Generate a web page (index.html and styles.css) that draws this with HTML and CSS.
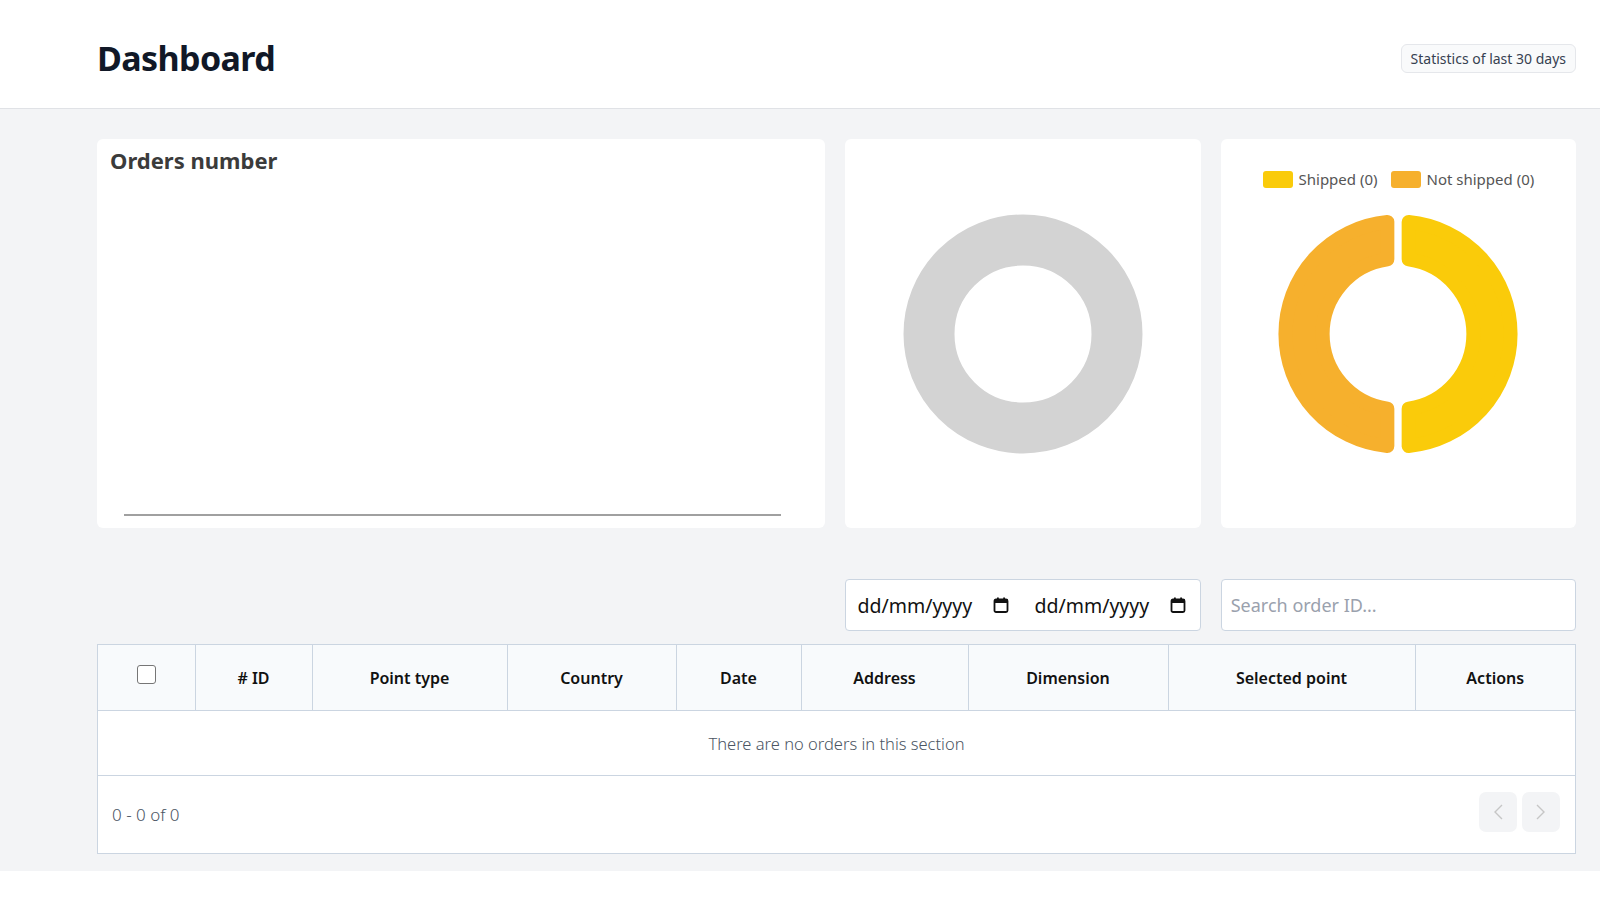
FILE: index.html
```html
<!DOCTYPE html>
<html lang="en">
<head>
<meta charset="UTF-8">
<meta name="viewport" content="width=device-width, initial-scale=1.0">
<title>Dashboard</title>
<link rel="stylesheet" href="styles.css">
</head>
<body>
	<header class="top">
		<h1>Dashboard</h1>
		<span class="period">Statistics of last 30 days</span>
	</header>

	<main class="content">
		<section class="charts">
			<div class="card">
				<h2>Orders number</h2>
				<div class="axis"></div>
			</div>

			<div class="card card-center">
				<svg class="donut" width="240" height="240" viewBox="-120 -120 240 240">
					<circle cx="0" cy="0" r="94" fill="none" stroke="#d3d3d3" stroke-width="51"/>
				</svg>
			</div>

			<div class="card card-legend">
				<div class="legend">
					<span class="legend-item"><i class="swatch shipped"></i>Shipped (0)</span>
					<span class="legend-item"><i class="swatch not-shipped"></i>Not shipped (0)</span>
				</div>
				<svg class="donut" width="240" height="240" viewBox="-120 -120 240 240">
					<path d="M -10.65 112 A 112.5 112.5 0 0 1 -10.65 -112 L -10.65 -74.64 A 75.4 75.4 0 0 0 -10.65 74.64 Z" fill="#f6b02d" stroke="#f6b02d" stroke-width="14" stroke-linejoin="round"/>
					<path d="M 10.65 -112 A 112.5 112.5 0 0 1 10.65 112 L 10.65 74.64 A 75.4 75.4 0 0 0 10.65 -74.64 Z" fill="#facb0a" stroke="#facb0a" stroke-width="14" stroke-linejoin="round"/>
				</svg>
			</div>
		</section>

		<section class="filters">
			<div class="dates">
				<span class="date-field">dd/mm/yyyy
					<svg width="16" height="16" viewBox="0 0 16 16"><rect x="1.5" y="2.5" width="13" height="12.5" rx="1.5" fill="none" stroke="#111" stroke-width="1.8"/><rect x="1.5" y="2.5" width="13" height="3.5" fill="#111"/><rect x="4" y="0.5" width="1.8" height="3" fill="#111"/><rect x="10.2" y="0.5" width="1.8" height="3" fill="#111"/></svg>
				</span>
				<span class="date-field">dd/mm/yyyy
					<svg width="16" height="16" viewBox="0 0 16 16"><rect x="1.5" y="2.5" width="13" height="12.5" rx="1.5" fill="none" stroke="#111" stroke-width="1.8"/><rect x="1.5" y="2.5" width="13" height="3.5" fill="#111"/><rect x="4" y="0.5" width="1.8" height="3" fill="#111"/><rect x="10.2" y="0.5" width="1.8" height="3" fill="#111"/></svg>
				</span>
			</div>
			<input class="search" type="text" placeholder="Search order ID...">
		</section>

		<div class="orders">
			<table>
				<colgroup>
					<col class="c-check">
					<col class="c-id">
					<col class="c-type">
					<col class="c-country">
					<col class="c-date">
					<col class="c-address">
					<col class="c-dim">
					<col class="c-point">
					<col>
				</colgroup>
				<thead>
					<tr>
						<th><span class="check"></span></th>
						<th># ID</th>
						<th>Point type</th>
						<th>Country</th>
						<th>Date</th>
						<th>Address</th>
						<th>Dimension</th>
						<th>Selected point</th>
						<th>Actions</th>
					</tr>
				</thead>
				<tbody>
					<tr>
						<td colspan="9" class="empty">There are no orders in this section</td>
					</tr>
				</tbody>
			</table>
			<div class="pager">
				<span>0 - 0 of 0</span>
				<div class="pager-buttons">
					<button type="button"><svg width="10" height="16" viewBox="0 0 10 16"><path d="M9 1 L2 8 L9 15" fill="none" stroke="#c6c6c6" stroke-width="1.4"/></svg></button>
					<button type="button"><svg width="10" height="16" viewBox="0 0 10 16"><path d="M1 1 L8 8 L1 15" fill="none" stroke="#c6c6c6" stroke-width="1.4"/></svg></button>
				</div>
			</div>
		</div>
	</main>
</body>
</html>
```

FILE: styles.css
```css
body {
	font-family: 'Segoe UI', 'Noto Sans', 'Open Sans', sans-serif;
	margin: 0;
	padding: 0;
	background-color: white;
}

.top {
	height: 100px;
	box-sizing: content-box;
	background-color: white;
	border-bottom: 1px solid #e0e2e6;
	box-shadow: 0 1px 2px rgba(0, 0, 0, 0.05);
	display: flex;
	align-items: center;
	justify-content: space-between;
	padding: 8px 24px 0 97px;
}

.top h1 {
	margin: 0;
	font-size: 34px;
	font-weight: 700;
	color: #111827;
	letter-spacing: -0.6px;
}

.period {
	font-size: 14px;
	color: #374151;
	background-color: #f9fafb;
	border: 1px solid #e5e7eb;
	border-radius: 6px;
	padding: 4px 9px;
}

.content {
	background-color: #f3f4f6;
	padding: 30px 24px 17px 97px;
}

.charts,
.filters {
	display: grid;
	grid-template-columns: 730fr 356fr 356fr;
	gap: 20px;
}

.card {
	background-color: white;
	border-radius: 6px;
	height: 389px;
	box-sizing: border-box;
	display: flex;
	flex-direction: column;
}

.card h2 {
	margin: 0;
	padding: 6px 13px;
	font-size: 22px;
	font-weight: 700;
	color: #3b3b3b;
}

.axis {
	margin: auto 44px 12px 27px;
	height: 2px;
	background-color: #a0a0a0;
}

.card-center {
	align-items: center;
	justify-content: center;
}

.card-legend {
	display: grid;
	place-items: center;
}

.card-legend > * {
	grid-area: 1 / 1;
}

.legend {
	align-self: start;
	margin-top: 30px;
	display: flex;
	gap: 13px;
	font-size: 15px;
	color: #555;
}

.legend-item {
	display: flex;
	align-items: center;
	gap: 6px;
}

.swatch {
	display: inline-block;
	width: 30px;
	height: 17px;
	border-radius: 3px;
}

.shipped {
	background-color: #facb0a;
}

.not-shipped {
	background-color: #f6b02d;
}

.filters {
	margin-top: 51px;
	height: 52px;
}

.dates {
	grid-column: 2;
	background-color: white;
	border: 1px solid #cbd5e1;
	border-radius: 4px;
	display: flex;
	align-items: center;
	padding: 0 0 0 11px;
	gap: 25px;
}

.date-field {
	display: flex;
	align-items: center;
	justify-content: space-between;
	width: 152px;
	font-size: 19.5px;
	color: #111;
}

.search {
	font-family: inherit;
	font-size: 18px;
	border: 1px solid #cbd5e1;
	border-radius: 4px;
	padding: 0 9px;
	color: #111;
	background-color: white;
}

.search::placeholder {
	color: #9aa1ad;
}

.orders {
	margin-top: 13px;
	background-color: white;
	border: 1px solid #cbd5e1;
}

table {
	width: 100%;
	border-collapse: collapse;
	table-layout: fixed;
}

.c-check { width: 97px; }
.c-id { width: 117px; }
.c-type { width: 195px; }
.c-country { width: 169px; }
.c-date { width: 125px; }
.c-address { width: 167px; }
.c-dim { width: 200px; }
.c-point { width: 247px; }

th {
	height: 65px;
	background-color: #f8fafc;
	font-size: 16px;
	font-weight: 600;
	color: #111;
	border-right: 1px solid #cbd5e1;
	border-bottom: 1px solid #cbd5e1;
	text-align: center;
	padding: 0;
}

th:last-child {
	border-right: none;
}

.check {
	display: inline-block;
	width: 17px;
	height: 17px;
	border: 1px solid #767676;
	border-radius: 3px;
	vertical-align: middle;
	margin-top: -10px;
	background-color: white;
}

.empty {
	height: 64px;
	text-align: center;
	font-size: 16.5px;
	font-weight: 300;
	color: #4b5563;
	border-bottom: 1px solid #cbd5e1;
	padding: 0;
}

.pager {
	height: 77px;
	display: flex;
	align-items: center;
	justify-content: space-between;
	padding: 0 15px 0 14px;
	font-size: 17px;
	font-weight: 300;
	color: #4b5563;
}

.pager-buttons {
	display: flex;
	gap: 5px;
	margin-top: -6px;
}

.pager-buttons button {
	width: 38px;
	height: 40px;
	border: none;
	border-radius: 7px;
	background-color: #f3f4f6;
	display: flex;
	align-items: center;
	justify-content: center;
	padding: 0;
}
```
